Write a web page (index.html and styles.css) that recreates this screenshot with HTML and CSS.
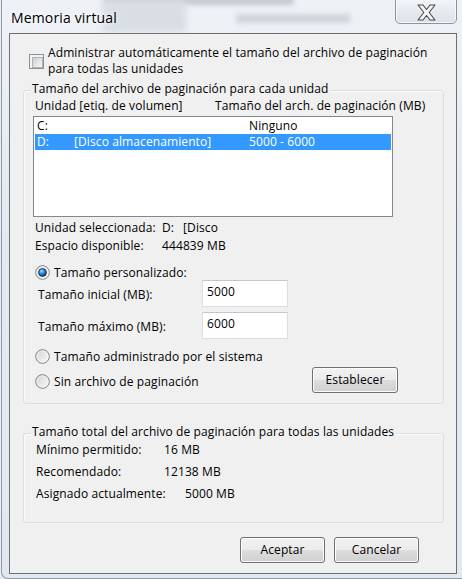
FILE: index.html
```html
<!DOCTYPE html>
<html lang="es">
<head>
<meta charset="utf-8">
<title>Memoria virtual</title>
<link rel="stylesheet" href="styles.css">
</head>
<body>
<div class="window">
  <div class="backdrop" aria-hidden="true">
    <span class="blur blur-top"></span>
    <span class="blur blur-tab"></span>
    <span class="blur blur-block"></span>
  </div>

  <div class="titlebar">
    <span class="title">Memoria virtual</span>
    <button class="close" type="button" aria-label="Cerrar">
      <svg width="21" height="17" viewBox="-1 -1 21 17">
        <polygon points="1,0 6,0 9.5,4.5 13,0 18,0 12.2,7.5 18,15 13,15 9.5,10.5 6,15 1,15 6.8,7.5" fill="#f4f4f4" stroke="#4a4a4a" stroke-width="1.1" stroke-linejoin="round"/>
      </svg>
    </button>
  </div>

  <div class="client">
    <div class="auto-row">
      <span class="checkbox"></span>
      <span class="auto-text">Administrar automáticamente el tamaño del archivo de paginación<br>para todas las unidades</span>
    </div>

    <div class="group group-drive">
      <span class="legend">Tamaño del archivo de paginación para cada unidad</span>

      <div class="list-head">
        <span class="head-drive">Unidad [etiq. de volumen]</span>
        <span>Tamaño del arch. de paginación (MB)</span>
      </div>

      <div class="listbox">
        <div class="row">
          <span class="col-letter">C:</span><span class="col-label"></span><span class="col-size">Ninguno</span>
        </div>
        <div class="row selected">
          <span class="col-letter">D:</span><span class="col-label">[Disco almacenamiento]</span><span class="col-size">5000 - 6000</span>
        </div>
      </div>

      <div class="info">
        <div class="info-row"><span class="info-label">Unidad seleccionada:</span><span>D:</span><span class="sel-label">[Disco</span></div>
        <div class="info-row"><span class="info-label">Espacio disponible:</span><span>444839 MB</span></div>
      </div>

      <div class="radio-row radio-custom">
        <svg class="radio" width="15" height="15" viewBox="0 0 15 15">
          <defs>
            <linearGradient id="rg1" x1="0" y1="0" x2="1" y2="1">
              <stop offset="0" stop-color="#d2d2d2"/><stop offset="1" stop-color="#fafafa"/>
            </linearGradient>
            <radialGradient id="rb1" cx="0.38" cy="0.32" r="0.7">
              <stop offset="0" stop-color="#a9e2ff"/><stop offset="0.45" stop-color="#2f8fd8"/><stop offset="1" stop-color="#0d3563"/>
            </radialGradient>
          </defs>
          <circle cx="7.5" cy="7.5" r="6.8" fill="url(#rg1)" stroke="#7d7f80" stroke-width="1"/>
          <circle cx="7.5" cy="7.5" r="5.6" fill="none" stroke="#ffffff" stroke-opacity="0.7" stroke-width="1"/>
          <circle cx="7.5" cy="7.5" r="3.9" fill="url(#rb1)" stroke="#1c3656" stroke-width="0.9"/>
        </svg>
        <span class="radio-label">Tamaño personalizado:</span>
      </div>

      <div class="field-row">
        <label class="field-label" for="ini">Tamaño inicial (MB):</label>
        <input class="textbox" id="ini" type="text" value="5000">
      </div>
      <div class="field-row field-second">
        <label class="field-label" for="max">Tamaño máximo (MB):</label>
        <input class="textbox" id="max" type="text" value="6000">
      </div>

      <div class="radio-row radio-system">
        <svg class="radio" width="15" height="15" viewBox="0 0 15 15">
          <defs>
            <linearGradient id="rg2" x1="0" y1="0" x2="1" y2="1">
              <stop offset="0" stop-color="#d2d2d2"/><stop offset="1" stop-color="#fafafa"/>
            </linearGradient>
          </defs>
          <circle cx="7.5" cy="7.5" r="6.8" fill="url(#rg2)" stroke="#7d7f80" stroke-width="1"/>
          <circle cx="7.5" cy="7.5" r="5.6" fill="none" stroke="#ffffff" stroke-opacity="0.6" stroke-width="1"/>
        </svg>
        <span class="radio-label">Tamaño administrado por el sistema</span>
      </div>

      <div class="last-row">
        <div class="radio-row radio-none">
          <svg class="radio" width="15" height="15" viewBox="0 0 15 15">
            <defs>
              <linearGradient id="rg3" x1="0" y1="0" x2="1" y2="1">
                <stop offset="0" stop-color="#d2d2d2"/><stop offset="1" stop-color="#fafafa"/>
              </linearGradient>
            </defs>
            <circle cx="7.5" cy="7.5" r="6.8" fill="url(#rg3)" stroke="#7d7f80" stroke-width="1"/>
            <circle cx="7.5" cy="7.5" r="5.6" fill="none" stroke="#ffffff" stroke-opacity="0.6" stroke-width="1"/>
          </svg>
          <span class="radio-label">Sin archivo de paginación</span>
        </div>
        <button class="btn btn-set" type="button">Establecer</button>
      </div>
    </div>

    <div class="group group-total">
      <span class="legend">Tamaño total del archivo de paginación para todas las unidades</span>
      <div class="total-row"><span class="total-label">Mínimo permitido:</span><span>16 MB</span></div>
      <div class="total-row"><span class="total-label">Recomendado:</span><span>12138 MB</span></div>
      <div class="total-row"><span class="total-label total-label-wide">Asignado actualmente:</span><span>5000 MB</span></div>
    </div>

    <div class="actions">
      <button class="btn" type="button">Aceptar</button>
      <button class="btn" type="button">Cancelar</button>
    </div>
  </div>
</div>
</body>
</html>
```

FILE: styles.css
```css
* { box-sizing: border-box; }

html, body {
  margin: 0;
  padding: 0;
}

body {
  width: 462px;
  height: 579px;
  overflow: hidden;
  background: #e6ecf2;
  font-family: "Open Sans", "Noto Sans", sans-serif;
  font-size: 12px;
  line-height: 15px;
  letter-spacing: 0.1px;
  color: #000;
}

.window {
  position: relative;
  width: 461px;
  height: 579px;
  margin-left: 1px;
  padding: 0 5px 4px 7px;
  border-left: 1px solid #949ca5;
  border-bottom: 1px solid #949ca5;
  border-bottom-left-radius: 7px;
  background: linear-gradient(180deg, #eef2f7 0%, #e4eaf1 40%, #e2e8ef 100%);
}

/* blurred desktop showing through the glass frame */
.backdrop {
  position: absolute;
  inset: 0;
  overflow: hidden;
}
.blur {
  position: absolute;
  display: block;
}
.blur-top {
  left: 102px;
  top: -4px;
  width: 190px;
  height: 9px;
  background: #8a9098;
  opacity: 0.4;
  filter: blur(2.5px);
}
.blur-tab {
  left: 234px;
  top: 14px;
  width: 114px;
  height: 9px;
  background: #a3a9b0;
  opacity: 0.4;
  filter: blur(2.5px);
}
.blur-block {
  left: 100px;
  top: 0;
  width: 84px;
  height: 32px;
  background: #d9dee4;
  filter: blur(3px);
}

.titlebar {
  position: relative;
  height: 33px;
  display: flex;
  justify-content: space-between;
  align-items: flex-start;
}

.title {
  margin: 8px 0 0 2px;
  font-size: 14px;
  line-height: 20px;
  letter-spacing: 0.15px;
  color: #000;
  text-shadow: 0 0 8px #fff, 0 0 4px #fff;
}

.close {
  width: 62px;
  height: 26px;
  margin-top: -2px;
  padding: 0;
  display: flex;
  align-items: center;
  justify-content: center;
  border: 1px solid #8d939b;
  border-radius: 0 0 5px 5px;
  background: linear-gradient(180deg, #f3f6f9 0%, #e6ebf0 50%, #dce2e9 100%);
  box-shadow: inset 0 0 0 1px rgba(255, 255, 255, 0.7);
}
.close svg {
  display: block;
  margin-top: 2px;
}

.client {
  position: relative;
  height: 541px;
  border: 1px solid #6c7075;
  background: #f0f0f0;
  padding: 11px 0 10px 0;
}

/* auto-manage checkbox */
.auto-row {
  display: flex;
  align-items: center;
  margin-left: 19px;
}
.checkbox {
  position: relative;
  width: 15px;
  height: 15px;
  margin-right: 4px;
  border: 1px solid #8e8f8f;
  background: #f4f4f4;
  flex: none;
}
.checkbox::after {
  content: "";
  position: absolute;
  left: 2px;
  top: 2px;
  width: 9px;
  height: 9px;
  border: 1px solid #aeb3b9;
  background: linear-gradient(135deg, #c9cdd2 0%, #e6e8ea 60%, #f6f6f6 100%);
}
.auto-text {
  line-height: 16px;
}

/* group boxes */
.group {
  position: relative;
  margin: 13px 12px 0 13px;
  border: 1px solid #d5dfe5;
  border-radius: 3px;
  box-shadow: inset 1px 1px 0 #fbfcfd;
}
.legend {
  position: absolute;
  left: 7px;
  top: -10px;
  padding: 0 1px;
  background: #f0f0f0;
  line-height: 15px;
  white-space: nowrap;
}

.group-drive {
  padding: 7px 0 10px 11px;
}

.list-head {
  display: flex;
}
.head-drive {
  width: 180px;
}

.listbox {
  width: 360px;
  height: 101px;
  margin: 3px 0 0 -2px;
  padding: 1px;
  border: 1px solid #828790;
  background: #fff;
}
.row {
  display: flex;
  height: 16px;
  line-height: 16px;
  padding-left: 2px;
}
.row.selected {
  background: #3399ff;
  color: #fff;
}
.col-letter { width: 37px; }
.col-label { width: 175px; }

.info {
  margin-top: 2px;
}
.info-row {
  display: flex;
  line-height: 18px;
}
.info-label {
  width: 127px;
}
.sel-label {
  margin-left: 9px;
}

.radio-row {
  display: flex;
  align-items: center;
  height: 15px;
}
.radio {
  display: block;
  flex: none;
}
.radio-label {
  margin-left: 4px;
}
.radio-custom {
  margin-top: 10px;
}

.field-row {
  display: flex;
  align-items: center;
}
.field-second {
  margin-top: 5px;
}
.field-label {
  width: 167px;
  padding: 2px 0 0 3px;
}
.textbox {
  width: 86px;
  height: 27px;
  margin: 0;
  padding: 0 4px 4px 4px;
  border: 1px solid #dadde2;
  border-top-color: #c3c7cd;
  background: #fff;
  font: inherit;
  letter-spacing: inherit;
  line-height: 15px;
  color: #000;
  outline: none;
}

.radio-system {
  margin-top: 10px;
}

.last-row {
  display: flex;
  align-items: flex-start;
  margin-top: 3px;
}
.radio-none {
  margin-top: 7px;
}

.btn {
  width: 85px;
  height: 26px;
  margin: 0;
  padding: 0 0 1px 0;
  border: 1px solid #707070;
  border-radius: 3px;
  background: linear-gradient(180deg, #f2f2f2 0%, #ebebeb 48%, #dddddd 52%, #cfcfcf 100%);
  box-shadow: inset 0 0 0 1px #fcfcfc;
  font: inherit;
  letter-spacing: inherit;
  color: #000;
}
.btn-set {
  width: 86px;
  margin-left: auto;
  margin-right: 45px;
}

.group-total {
  margin-top: 29px;
  padding: 5px 0 17px 12px;
}
.total-row {
  display: flex;
  line-height: 22px;
}
.total-label {
  width: 128px;
}
.total-label-wide {
  width: 149px;
}

.actions {
  display: flex;
  justify-content: flex-end;
  gap: 9px;
  margin-top: 14px;
  padding-right: 37px;
}
```
